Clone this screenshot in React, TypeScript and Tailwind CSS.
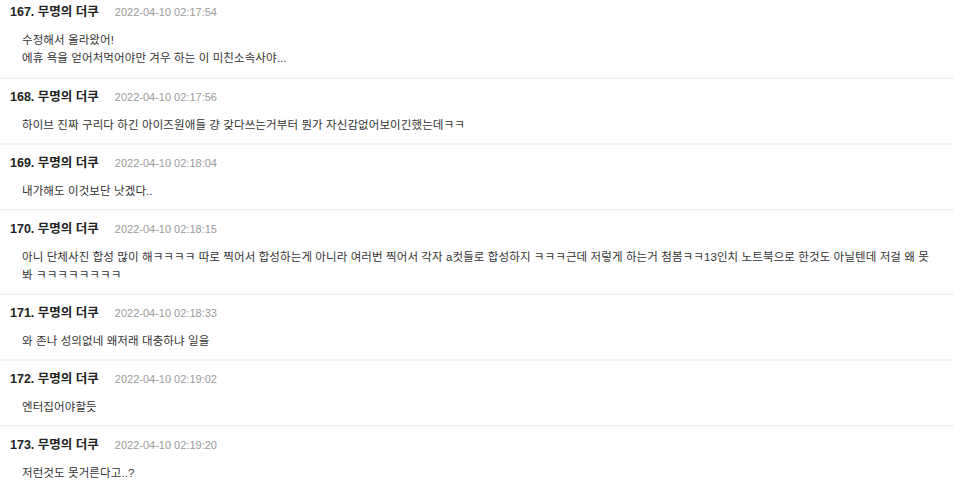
const comments = [
  { no: 167, at: "2022-04-10 02:17:54", body: ["수정해서 올라왔어!", "에휴 욕을 얻어처먹어야만 겨우 하는 이 미친소속사야..."] },
  { no: 168, at: "2022-04-10 02:17:56", body: ["하이브 진짜 구리다 하긴 아이즈원애들 걍 갖다쓰는거부터 뭔가 자신감없어보이긴했는데ㅋㅋ"] },
  { no: 169, at: "2022-04-10 02:18:04", body: ["내가해도 이것보단 낫겠다.."] },
  {
    no: 170,
    at: "2022-04-10 02:18:15",
    body: [
      "아니 단체사진 합성 많이 해ㅋㅋㅋㅋ 따로 찍어서 합성하는게 아니라 여러번 찍어서 각자 a컷들로 합성하지 ㅋㅋㅋ근데 저렇게 하는거 첨봄ㅋㅋ13인치 노트북으로 한것도 아닐텐데 저걸 왜 못",
      "봐 ㅋㅋㅋㅋㅋㅋㅋㅋ",
    ],
  },
  { no: 171, at: "2022-04-10 02:18:33", body: ["와 존나 성의없네 왜저래 대충하냐 일을"] },
  { no: 172, at: "2022-04-10 02:19:02", body: ["엔터집어야할듯"] },
  { no: 173, at: "2022-04-10 02:19:20", body: ["저런것도 못거른다고..?"] },
];

export default function App() {
  return (
    <div
      className="w-[960px] h-[487px] overflow-hidden bg-white"
      style={{ fontFamily: '"Liberation Sans", "Noto Sans CJK KR", sans-serif' }}
    >
      <ul className="w-[954px]">
        {comments.map((c) => (
          <li key={c.no} className="border-b-2 border-[#f3f3f3] pt-[9px] pb-[9px] first:pt-[3px] first:pb-[10px]">
            <div className="flex items-baseline px-[10px] h-[18px] leading-[18px]">
              <span className="text-[12.5px] font-bold text-[#222]">
                {c.no}. 무명의 더쿠
              </span>
              <span className="ml-[16px] text-[11px] text-[#9a9a9a]">{c.at}</span>
            </div>
            <div className="mt-[10px] px-[22px] text-[11.5px] leading-[18px] text-[#333] tracking-[0.1px]">
              {c.body.map((l, i) => (
                <p key={i} className="whitespace-nowrap">{l}</p>
              ))}
            </div>
          </li>
        ))}
      </ul>
    </div>
  );
}
